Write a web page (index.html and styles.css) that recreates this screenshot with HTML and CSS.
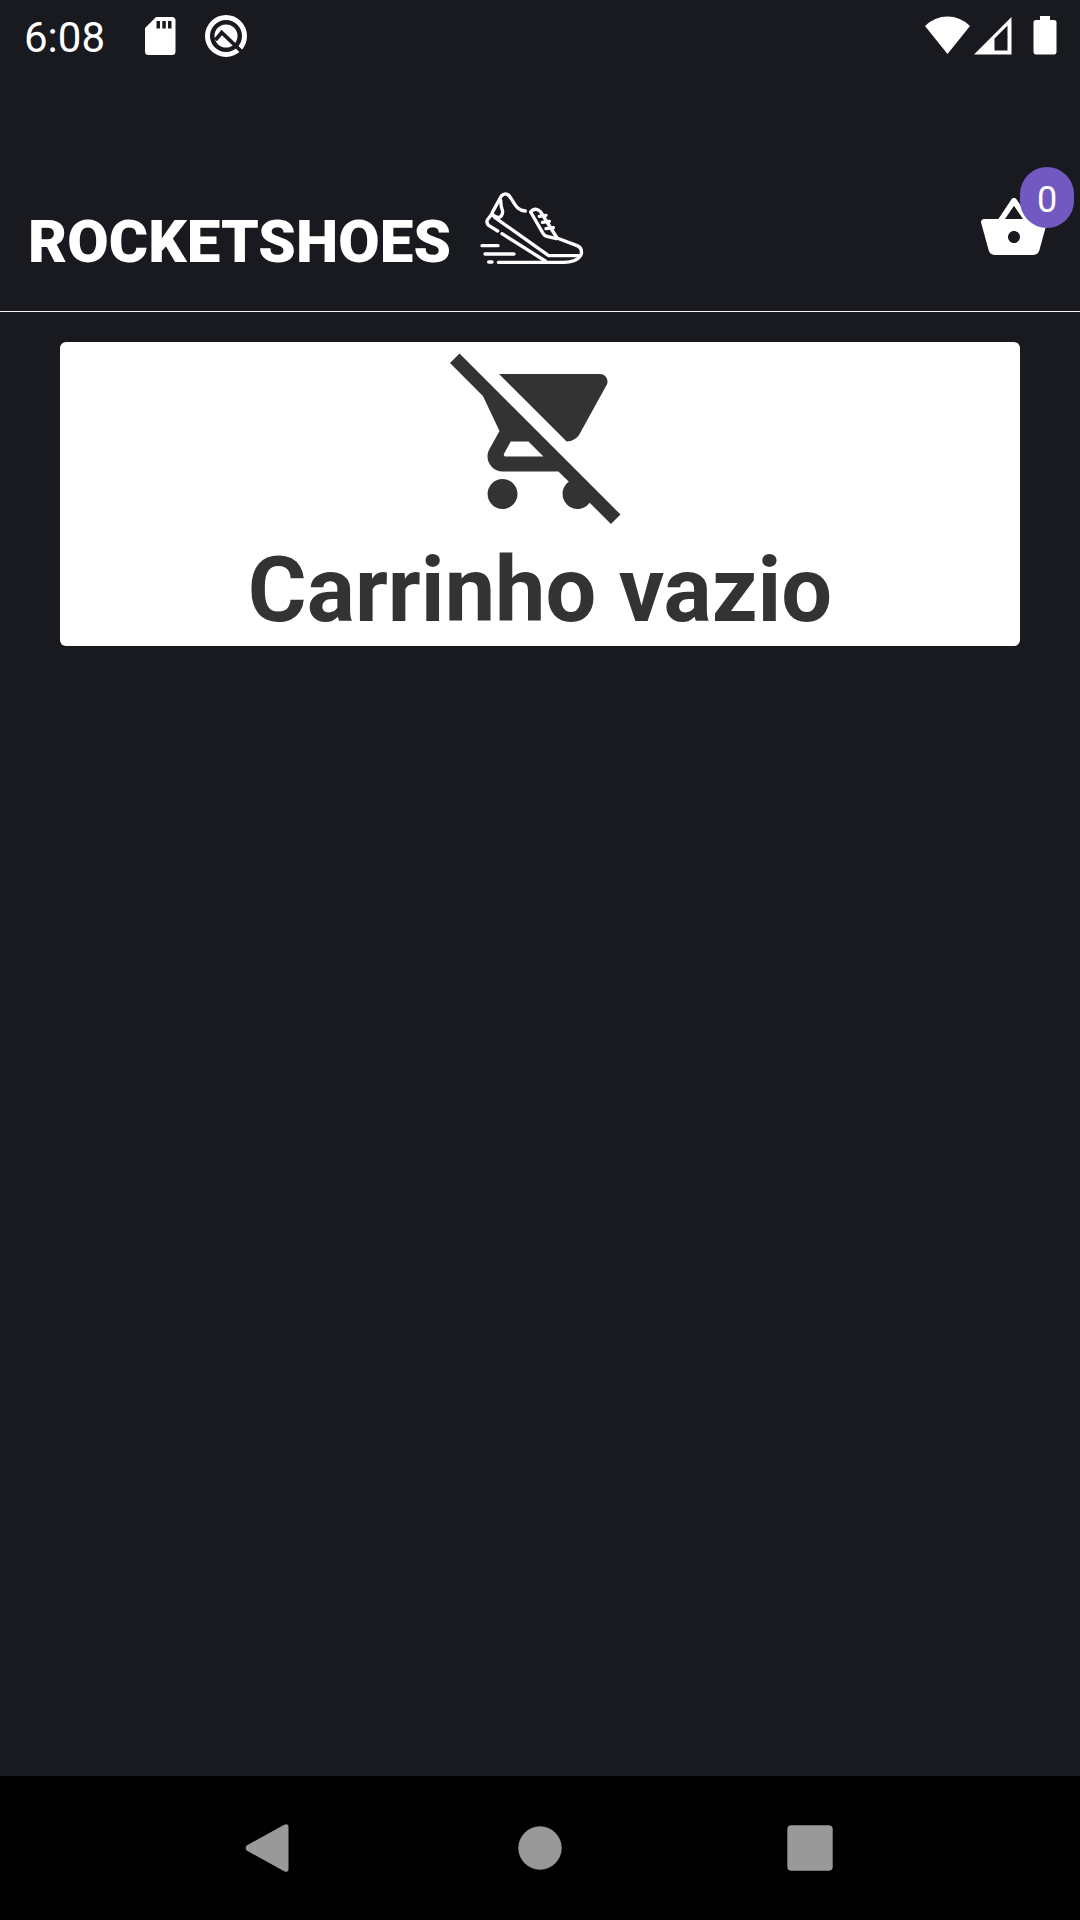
FILE: index.html
```html
<!DOCTYPE html>
<html lang="pt-BR">
<head>
<meta charset="utf-8">
<title>RocketShoes</title>
<link rel="stylesheet" href="styles.css">
</head>
<body>
<div class="screen">
  <div class="status-bar">
    <span class="clock">6:08</span>
    <svg class="sd-icon" width="32" height="40" viewBox="0 0 32 40"><path fill="#fff" fill-rule="evenodd" d="M12 1H28Q31.500 1 31.500 4.500V35.500Q31.500 39 28 39H4.500Q1 39 1 35.500V12ZM12.500 5V12.500H16V5ZM18.300 5V12.500H21.800V5ZM24 5V12.500H27.500V5Z"/></svg>
    <svg class="q-icon" width="44" height="44" viewBox="0 0 44 44"><circle cx="22" cy="22" r="18.500" fill="none" stroke="#fff" stroke-width="5"/><circle cx="22" cy="22" r="11.500" fill="#fff"/><path d="M11.500 26L17.700 18.500L38 38" fill="none" stroke="#191920" stroke-width="3.800"/></svg>
    <div class="system-icons">
      <svg width="47" height="40" viewBox="0 0 47 40"><path fill="#fff" d="M1 11Q10.500 1.500 23.500 1.500T46 11L23.500 39Z"/></svg>
      <svg width="40" height="40" viewBox="0 0 40 40"><path fill="#fff" fill-rule="evenodd" d="M1 39.500L38.500 2V39.500ZM21.500 23.500V35.500H34.500V10.500Z"/></svg>
      <svg class="battery" width="24" height="40" viewBox="0 0 24 40"><path fill="#fff" d="M7 1H17V5H21Q23.500 5 23.500 7.500V36.500Q23.500 39.500 21 39.500H3Q.5 39.500.5 36.500V7.500Q.5 5 3 5H7Z"/></svg>
    </div>
  </div>
  <header class="header">
    <div class="brand">
      <h1 class="brand-name">ROCKETSHOES</h1>
      <svg class="shoe" width="125" height="95" viewBox="1 0 375 285" fill="none" stroke="#fff" stroke-width="10" stroke-linecap="round" stroke-linejoin="round">
        <path d="M167 93C145 91 139 79 128 61L119 48Q107 35 95 48L68 97Q67 105 75 112L237 227H332"/>
        <path d="M93 61Q93 78 99 94Q99 111 85 113L75 108"/>
        <path d="M66 103L53 120Q49 130 58 137L84 153M97 161L227 243"/>
        <path d="M183 96Q191 86 201 88Q208 89 214 97L262 174L322 197Q338 203 335 222Q325 247 282 247H86"/>
        <path d="M183 96L220 160Q224 167 232 169L260 176M209 109L229 106M218 127L239 124M229 146L251 143"/>
        <path d="M37 197H85M46 222H133M57 246H67"/>
      </svg>
    </div>
    <div class="basket">
      <svg width="72" height="72" viewBox="0 0 24 24"><path fill="#fff" d="M17.210 9l-4.380-6.560c-.19-.28-.51-.42-.83-.42-.32 0-.64.14-.83.43L6.790 9H2c-.55 0-1 .45-1 1 0 .09.01.18.04.27l2.540 9.270c.23.84 1 1.460 1.920 1.460h13c.92 0 1.690-.62 1.930-1.460l2.540-9.270L23 10c0-.55-.45-1-1-1h-4.790zM9 9l3-4.400L15 9H9zm3 8c-1.100 0-2-.9-2-2s.9-2 2-2 2 .9 2 2-.9 2-2 2z"/></svg>
      <span class="badge">0</span>
    </div>
  </header>
  <main class="content">
    <section class="empty-cart">
      <svg width="180" height="180" viewBox="0 0 24 24"><path fill="#333" d="M22.730 22.730L2.770 2.770 2 2l-.73-.73L0 2.540l4.390 4.390 2.210 4.660-1.350 2.450c-.16.28-.25.61-.25.96 0 1.100.9 2 2 2h7.460l1.380 1.380c-.5.36-.83.95-.83 1.620 0 1.100.89 2 1.990 2 .67 0 1.260-.33 1.620-.84L21.460 24l1.270-1.270zM7.420 15c-.14 0-.25-.11-.25-.25l.03-.12.9-1.630h2.360l2 2H7.420zm8.130-2c.75 0 1.410-.41 1.750-1.030l3.580-6.490c.08-.14.12-.31.12-.48 0-.55-.45-1-1-1H6.540l9.010 9zM7 18c-1.100 0-1.990.9-1.990 2S5.900 22 7 22s2-.9 2-2-.9-2-2-2z"/></svg>
      <p class="empty-text">Carrinho vazio</p>
    </section>
  </main>
  <nav class="nav-bar">
    <svg width="48" height="48" viewBox="0 0 48 48"><path fill="#999" d="M.7 21.500L38.200 .8Q42.500-1 42.500 3.500V44.500Q42.500 49 38.200 47.200L.7 26.500Q-1.300 24 .7 21.500Z"/></svg>
    <svg width="48" height="48" viewBox="0 0 48 48"><circle cx="24" cy="24" r="21.700" fill="#999"/></svg>
    <svg width="48" height="48" viewBox="0 0 48 48"><rect x="1.300" y="1.300" width="45.400" height="45.400" rx="4" fill="#999"/></svg>
  </nav>
</div>
</body>
</html>
```
FILE: styles.css
```css
* { box-sizing: border-box; margin: 0; }
body { background: #191920; font-family: Roboto, sans-serif; color: #fff; }
svg { display: block; flex: none; overflow: visible; }
.screen { width: 1080px; height: 1920px; display: flex; flex-direction: column; overflow: hidden; }
.status-bar { height: 72px; display: flex; align-items: flex-start; padding: 0 24px; }
.clock { width: 120px; padding-top: 13px; font-size: 42px; line-height: 49px; }
.sd-icon { margin-top: 16px; }
.q-icon { margin: 14px 0 0 28px; }
.system-icons { display: flex; margin: 15px 0 0 auto; }
.system-icons svg + svg { margin-left: 2px; }
.system-icons .battery { margin-left: 19.5px; margin-right: -0.5px; }
.header { height: 240px; border-bottom: 1px solid #f5f5f5; display: flex; justify-content: space-between; padding: 108px 30px 0 28px; }
.brand { display: flex; align-items: flex-start; }
.brand-name { width: 442px; padding-top: 27px; font-size: 60px; line-height: 70px; font-weight: 900; letter-spacing: 0.08px; white-space: nowrap; }
.basket { position: relative; padding-top: 12px; }
.badge { position: absolute; left: 42px; top: -13px; width: 54px; height: 61px; border-radius: 27px; background: #7159c1; font-size: 36px; line-height: 67px; text-align: center; }
.content { flex: 1; padding: 30px 60px; }
.empty-cart { height: 304px; border-radius: 6px; background: #fff; display: flex; flex-direction: column; align-items: center; padding-top: 2px; }
.empty-text { margin-top: 14px; font-size: 90px; line-height: 106px; font-weight: 700; color: #333; white-space: nowrap; }
.nav-bar { height: 144px; background: #000; display: flex; align-items: center; justify-content: center; gap: 222px; }
```
